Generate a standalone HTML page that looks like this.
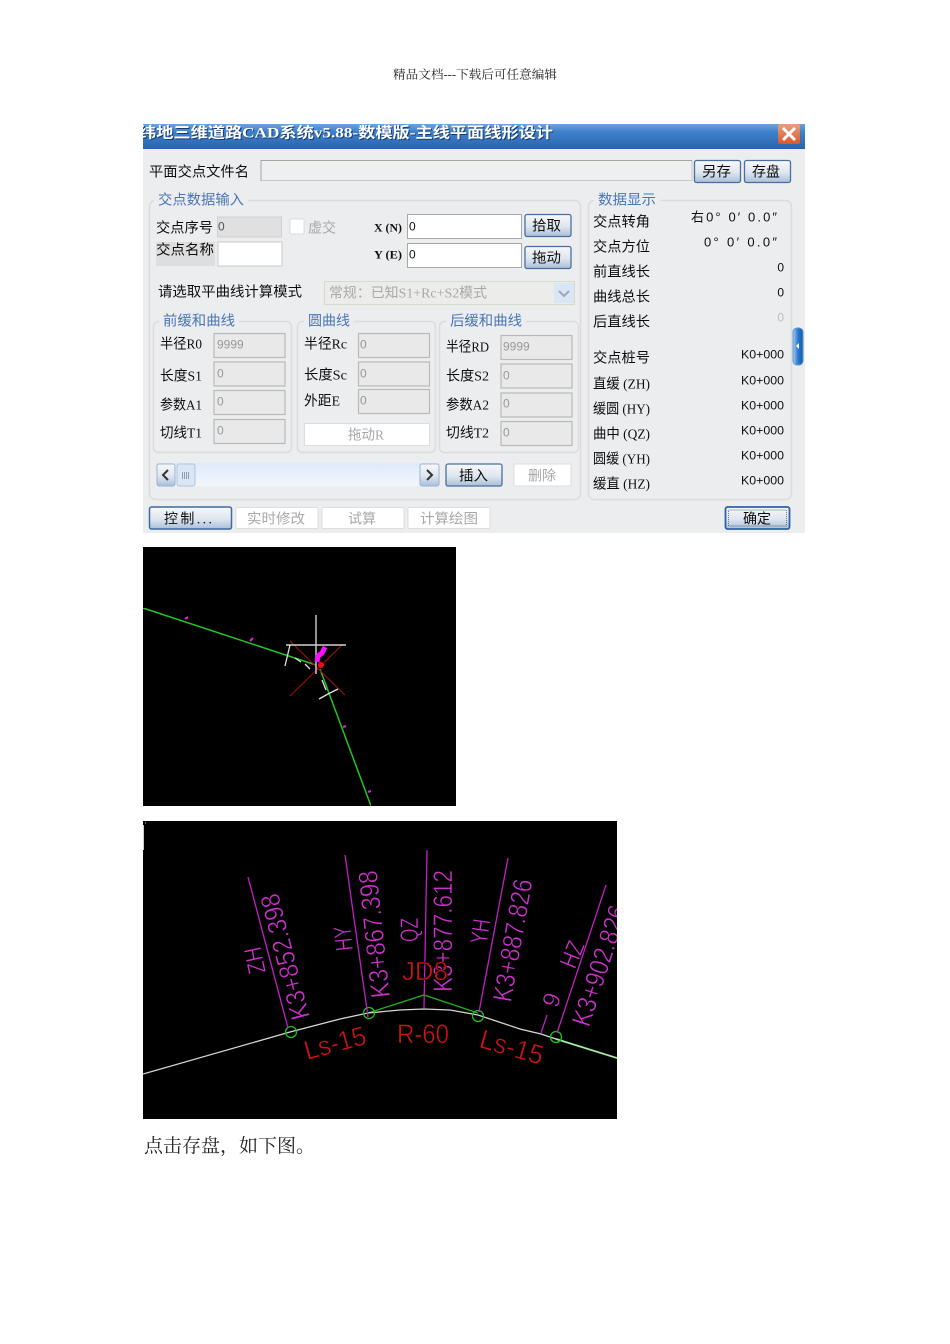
<!DOCTYPE html>
<html lang="zh"><head><meta charset="utf-8"><title>精品文档</title>
<style>
html,body{margin:0;padding:0;background:#fff;width:950px;height:1344px;overflow:hidden}
svg{display:block;position:absolute;left:0;top:0}
text{font-family:"Liberation Sans","Noto Sans CJK SC",sans-serif;white-space:pre}
.d text{font-size:14px;fill:#111;font-family:"Liberation Serif","Noto Sans CJK SC",serif;transform:translateY(.7px)}
.d text.n{font-family:"Liberation Sans","Noto Sans CJK SC",sans-serif}
.d text.s{font-family:"Liberation Serif","Noto Serif CJK SC",serif;fill:#111}
.d text.leg{fill:#4a74b4}
.d text.dis{fill:#a8a8a8}
.d text.val{font-size:12px;fill:#999;font-family:"Liberation Sans",sans-serif}
.d text.t1{font-family:"Liberation Serif","Noto Sans CJK SC",serif;font-size:15px;font-weight:bold;fill:#123a70}
.d text.t2{font-family:"Liberation Serif","Noto Sans CJK SC",serif;font-size:15px;font-weight:bold;fill:#fff}
.cad text{font-family:"Liberation Sans",sans-serif;stroke:#000;stroke-width:.55px;paint-order:fill}
.m{fill:#d030d0}
.r{fill:#cc1414}
</style></head><body>
<svg width="950" height="1344" viewBox="0 0 950 1344" xmlns="http://www.w3.org/2000/svg">
<defs>
<linearGradient id="tb" x1="0" y1="0" x2="0" y2="1"><stop offset="0" stop-color="#6ea4dc"/><stop offset=".3" stop-color="#3f82cc"/><stop offset="1" stop-color="#2a62ac"/></linearGradient>
<linearGradient id="btn" x1="0" y1="0" x2="0" y2="1"><stop offset="0" stop-color="#f6f8fb"/><stop offset=".55" stop-color="#dfe6ef"/><stop offset="1" stop-color="#a9bfd9"/></linearGradient>
<linearGradient id="track" x1="0" y1="0" x2="0" y2="1"><stop offset="0" stop-color="#dfeafa"/><stop offset="1" stop-color="#f2f6fc"/></linearGradient>
<linearGradient id="cl" x1="0" y1="0" x2="0" y2="1"><stop offset="0" stop-color="#e8a080"/><stop offset="1" stop-color="#d8582c"/></linearGradient>
<linearGradient id="hd" x1="0" y1="0" x2="1" y2="0"><stop offset="0" stop-color="#a8d0f0"/><stop offset=".5" stop-color="#2a78d0"/><stop offset="1" stop-color="#1a5aa8"/></linearGradient>
<filter id="b" x="0" y="0" width="100%" height="100%"><feGaussianBlur stdDeviation="0.35"/></filter>
<clipPath id="c1"><rect x="143" y="124" width="662" height="409"/></clipPath>
<clipPath id="c3"><rect x="143" y="821" width="474" height="298"/></clipPath>
</defs>

<text x="393" y="78.500" font-size="12" textLength="164" lengthAdjust="spacingAndGlyphs" style="font-family:'Liberation Serif','Noto Serif CJK SC',serif" fill="#222">精品文档---下载后可任意编辑</text>

<g class="d" clip-path="url(#c1)" filter="url(#b)">
<rect x="143" y="124" width="662" height="409" fill="#ecedef"/>
<rect x="143" y="124" width="662" height="25" fill="url(#tb)"/>
<text class="t1" x="140" y="138" textLength="414" lengthAdjust="spacingAndGlyphs">纬地三维道路CAD系统v5.88-数模版-主线平面线形设计</text>
<text class="t2" x="139" y="137" textLength="414" lengthAdjust="spacingAndGlyphs">纬地三维道路CAD系统v5.88-数模版-主线平面线形设计</text>
<rect x="778" y="124" width="22" height="20" rx="2" fill="url(#cl)"/>
<path d="M783 128L795 140M795 128L783 140" stroke="#fff" stroke-width="3"/>

<text x="149" y="176" textLength="100" lengthAdjust="spacingAndGlyphs">平面交点文件名</text>
<rect x="261" y="160.500" width="431" height="20" fill="#eeeff1" stroke="#c9c9c6"/>
<path d="M261 181V160.500H692" fill="none" stroke="#a5a5a0"/>

<rect x="694.500" y="160.500" width="46" height="22" rx="2" fill="url(#btn)" stroke="#4a6f9c" stroke-width="1.300"/>
<text x="702" y="176" textLength="29" lengthAdjust="spacingAndGlyphs">另存</text>
<rect x="744.500" y="160.500" width="46" height="22" rx="2" fill="url(#btn)" stroke="#4a6f9c" stroke-width="1.300"/>
<text x="752" y="176" textLength="28" lengthAdjust="spacingAndGlyphs">存盘</text>

<rect x="149.500" y="200.500" width="431" height="299" rx="6" fill="#ecedef" stroke="#dcdcdc" stroke-width="1.500"/>
<rect x="154" y="194" width="94" height="12" fill="#ecedef"/>
<text class="leg" x="158" y="204" textLength="86" lengthAdjust="spacingAndGlyphs">交点数据输入</text>
<rect x="588.500" y="200.500" width="203" height="299" rx="6" fill="#ecedef" stroke="#dcdcdc" stroke-width="1.500"/>
<rect x="594" y="194" width="66" height="12" fill="#ecedef"/>
<text class="leg" x="598" y="204" textLength="58" lengthAdjust="spacingAndGlyphs">数据显示</text>

<text x="156" y="232" textLength="57" lengthAdjust="spacingAndGlyphs">交点序号</text>
<rect x="217.500" y="217" width="64" height="20" fill="#e0e0e0" stroke="#d0d0d0"/>
<text class="n" x="218" y="230" style="font-size:12px;fill:#555">0</text>
<rect x="156" y="242" width="59" height="24" fill="#dedede"/>
<text x="156" y="254" textLength="58" lengthAdjust="spacingAndGlyphs">交点名称</text>
<rect x="218" y="242" width="64" height="24" fill="#fff" stroke="#c8c8c8"/>
<rect x="290" y="219" width="14" height="15" rx="1" fill="#fff" stroke="#dcdcdc"/>
<text class="dis" x="308" y="232" textLength="28" lengthAdjust="spacingAndGlyphs">虚交</text>
<text class="s" x="374" y="231" style="font-size:12px;font-weight:bold" textLength="28" lengthAdjust="spacingAndGlyphs">X (N)</text>
<text class="s" x="374" y="258" style="font-size:12px;font-weight:bold" textLength="28" lengthAdjust="spacingAndGlyphs">Y (E)</text>
<rect x="407.500" y="214.500" width="114" height="24" fill="#fff" stroke="#a8a8a8"/>
<rect x="407.500" y="243.500" width="114" height="24" fill="#fff" stroke="#a8a8a8"/>
<text class="n" x="409" y="230" style="font-size:12px">0</text>
<text class="n" x="409" y="258" style="font-size:12px">0</text>
<rect x="525" y="214.500" width="46" height="22" rx="2" fill="url(#btn)" stroke="#4a6f9c" stroke-width="1.300"/>
<text x="532" y="230" textLength="29" lengthAdjust="spacingAndGlyphs">拾取</text>
<rect x="525" y="246.500" width="46" height="22" rx="2" fill="url(#btn)" stroke="#4a6f9c" stroke-width="1.300"/>
<text x="532" y="262" textLength="29" lengthAdjust="spacingAndGlyphs">拖动</text>

<text x="158" y="296" textLength="144" lengthAdjust="spacingAndGlyphs">请选取平曲线计算模式</text>
<rect x="324.500" y="281.500" width="250" height="23" fill="#ecedea" stroke="#d8d8d0"/>
<text class="dis" x="329" y="297" textLength="158" lengthAdjust="spacingAndGlyphs">常规：已知S1+Rc+S2模式</text>
<rect x="554" y="283" width="20" height="20" fill="#d8e6f6"/>
<path d="M559 291L564 296L569 291" fill="none" stroke="#9aa8b8" stroke-width="2"/>

<rect x="153.500" y="321.500" width="138" height="131" rx="5" fill="none" stroke="#dcdcdc" stroke-width="1.500"/>
<rect x="159" y="314" width="80" height="12" fill="#ecedef"/>
<text class="leg" x="163" y="325" textLength="72" lengthAdjust="spacingAndGlyphs">前缓和曲线</text>
<rect x="297.500" y="321.500" width="138" height="131" rx="5" fill="none" stroke="#dcdcdc" stroke-width="1.500"/>
<rect x="304" y="314" width="50" height="12" fill="#ecedef"/>
<text class="leg" x="308" y="325" textLength="42" lengthAdjust="spacingAndGlyphs">圆曲线</text>
<rect x="439.500" y="321.500" width="139" height="131" rx="5" fill="none" stroke="#dcdcdc" stroke-width="1.500"/>
<rect x="446" y="314" width="80" height="12" fill="#ecedef"/>
<text class="leg" x="450" y="325" textLength="72" lengthAdjust="spacingAndGlyphs">后缓和曲线</text>

<g fill="#e9e9e9" stroke="#b9b9b9" stroke-width="1.200">
<rect x="214" y="333.500" width="71" height="24"/><rect x="214" y="362" width="71" height="24"/><rect x="214" y="390.500" width="71" height="24"/><rect x="214" y="419.500" width="71" height="24"/>
<rect x="358.500" y="333.500" width="71" height="24"/><rect x="358.500" y="362" width="71" height="24"/><rect x="358.500" y="389.500" width="71" height="24"/>
<rect x="501" y="335.500" width="71" height="24"/><rect x="501" y="364" width="71" height="24"/><rect x="501" y="393" width="71" height="24"/><rect x="501" y="421.500" width="71" height="24"/>
</g>
<text class="val" x="217" y="348">9999</text><text class="val" x="217" y="377">0</text><text class="val" x="217" y="405">0</text><text class="val" x="217" y="434">0</text>
<text class="val" x="360" y="348">0</text><text class="val" x="360" y="377">0</text><text class="val" x="360" y="404">0</text>
<text class="val" x="503" y="350">9999</text><text class="val" x="503" y="379">0</text><text class="val" x="503" y="407">0</text><text class="val" x="503" y="436">0</text>

<text x="160" y="348" textLength="42" lengthAdjust="spacingAndGlyphs">半径R0</text>
<text x="160" y="380" textLength="42" lengthAdjust="spacingAndGlyphs">长度S1</text>
<text x="160" y="409" textLength="42" lengthAdjust="spacingAndGlyphs">参数A1</text>
<text x="160" y="437" textLength="42" lengthAdjust="spacingAndGlyphs">切线T1</text>
<text x="304" y="348" textLength="43" lengthAdjust="spacingAndGlyphs">半径Rc</text>
<text x="304" y="379" textLength="43" lengthAdjust="spacingAndGlyphs">长度Sc</text>
<text x="304" y="405" textLength="36" lengthAdjust="spacingAndGlyphs">外距E</text>
<text x="446" y="351" textLength="43" lengthAdjust="spacingAndGlyphs">半径RD</text>
<text x="446" y="380" textLength="43" lengthAdjust="spacingAndGlyphs">长度S2</text>
<text x="446" y="409" textLength="43" lengthAdjust="spacingAndGlyphs">参数A2</text>
<text x="446" y="437" textLength="43" lengthAdjust="spacingAndGlyphs">切线T2</text>
<rect x="304.500" y="423.500" width="125" height="22" rx="1" fill="#fff" stroke="#ddd"/>
<text class="dis" x="348" y="439" textLength="36" lengthAdjust="spacingAndGlyphs">拖动R</text>

<rect x="156" y="463" width="283" height="23" fill="url(#track)"/>
<rect x="157" y="464" width="18" height="22" rx="2" fill="url(#btn)" stroke="#9db4d0"/>
<path d="M168 470L163 475L168 480" fill="none" stroke="#333" stroke-width="2"/>
<rect x="177" y="464" width="18" height="22" rx="2" fill="#dbe6f4" stroke="#b0c4dc"/>
<path d="M182.500 472V479M184.500 472V479M186.500 472V479M188.500 472V479" stroke="#7d8ca0" stroke-width=".8"/>
<rect x="420" y="464" width="19" height="22" rx="2" fill="url(#btn)" stroke="#9db4d0"/>
<path d="M427 470L432 475L427 480" fill="none" stroke="#333" stroke-width="2"/>
<rect x="446" y="464" width="56" height="22" rx="2" fill="url(#btn)" stroke="#4a6f9c" stroke-width="1.300"/>
<text x="459" y="480" textLength="29" lengthAdjust="spacingAndGlyphs">插入</text>
<rect x="514" y="464" width="57" height="22" rx="1" fill="#fff" stroke="#ddd"/>
<text class="dis" x="528" y="480" textLength="28" lengthAdjust="spacingAndGlyphs">删除</text>

<rect x="149.500" y="507" width="82" height="22" rx="2" fill="url(#btn)" stroke="#3f6ba4" stroke-width="1.500"/>
<text x="164" y="523" textLength="48" lengthAdjust="spacing">控制...</text>
<g fill="#fff" stroke="#ddd"><rect x="236" y="507.500" width="82" height="21" rx="1"/><rect x="322" y="507.500" width="82" height="21" rx="1"/><rect x="408" y="507.500" width="82" height="21" rx="1"/></g>
<text class="dis" x="247" y="523" textLength="58" lengthAdjust="spacingAndGlyphs">实时修改</text>
<text class="dis" x="348" y="523" textLength="28" lengthAdjust="spacingAndGlyphs">试算</text>
<text class="dis" x="420" y="523" textLength="58" lengthAdjust="spacingAndGlyphs">计算绘图</text>
<rect x="725.500" y="507" width="64" height="22" rx="2" fill="url(#btn)" stroke="#2f62a8" stroke-width="1.800"/>
<rect x="728.500" y="510" width="58" height="16" fill="none" stroke="#444" stroke-dasharray="1 1" stroke-width=".7"/>
<text x="743" y="523" textLength="28" lengthAdjust="spacingAndGlyphs">确定</text>

<text x="593" y="226" textLength="57" lengthAdjust="spacingAndGlyphs">交点转角</text>
<text x="593" y="251" textLength="57" lengthAdjust="spacingAndGlyphs">交点方位</text>
<text x="593" y="276" textLength="57" lengthAdjust="spacingAndGlyphs">前直线长</text>
<text x="593" y="301" textLength="57" lengthAdjust="spacingAndGlyphs">曲线总长</text>
<text x="593" y="326" textLength="57" lengthAdjust="spacingAndGlyphs">后直线长</text>
<text x="593" y="362" textLength="57" lengthAdjust="spacingAndGlyphs">交点桩号</text>
<text x="593" y="388" textLength="57" lengthAdjust="spacingAndGlyphs">直缓 (ZH)</text>
<text x="593" y="413" textLength="57" lengthAdjust="spacingAndGlyphs">缓圆 (HY)</text>
<text x="593" y="438" textLength="57" lengthAdjust="spacingAndGlyphs">曲中 (QZ)</text>
<text x="593" y="463" textLength="57" lengthAdjust="spacingAndGlyphs">圆缓 (YH)</text>
<text x="593" y="488" textLength="57" lengthAdjust="spacingAndGlyphs">缓直 (HZ)</text>
<text class="n" x="691" y="221" style="font-size:13px" textLength="86" lengthAdjust="spacing">右0° 0′ 0.0″</text>
<text class="n" x="704" y="246" style="font-size:13px" textLength="73" lengthAdjust="spacing">0° 0′ 0.0″</text>
<text class="n" x="784" y="271" text-anchor="end" style="font-size:12px">0</text>
<text class="n" x="784" y="296" text-anchor="end" style="font-size:12px">0</text>
<text class="n" x="784" y="321" text-anchor="end" style="font-size:12px;fill:#bbb">0</text>
<text class="n" x="741" y="358" style="font-size:12px" textLength="43" lengthAdjust="spacingAndGlyphs">K0+000</text>
<text class="n" x="741" y="384" style="font-size:12px" textLength="43" lengthAdjust="spacingAndGlyphs">K0+000</text>
<text class="n" x="741" y="409" style="font-size:12px" textLength="43" lengthAdjust="spacingAndGlyphs">K0+000</text>
<text class="n" x="741" y="434" style="font-size:12px" textLength="43" lengthAdjust="spacingAndGlyphs">K0+000</text>
<text class="n" x="741" y="459" style="font-size:12px" textLength="43" lengthAdjust="spacingAndGlyphs">K0+000</text>
<text class="n" x="741" y="484" style="font-size:12px" textLength="43" lengthAdjust="spacingAndGlyphs">K0+000</text>
<rect x="793" y="328" width="10" height="37" rx="4" fill="url(#hd)" stroke="#5a9ad0"/>
<path d="M799 343V349L796 346Z" fill="#fff"/>
</g>

<rect x="143" y="547" width="313" height="259" fill="#000"/>
<g fill="none" filter="url(#b)">
<path d="M143 608L316 665" stroke="#22c422" stroke-width="1.500"/>
<path d="M320 669L371 806" stroke="#22c422" stroke-width="1.500"/>
<path d="M290 641L345 695M343 644L290 696" stroke="#9a1010" stroke-width="1.200"/>
<path d="M316 615V674M286 645H346" stroke="#d0d0d0" stroke-width="1.400"/>
<path d="M290 645L285 666M295 658L301 662M305 664L310 669M322 680L326 690M338 689L328 694L319 699" stroke="#e0e0e0" stroke-width="1.300"/>
<path d="M317 662L318 656L322 653L325 647" stroke="#ff10ff" stroke-width="5"/>
<path d="M185 619L188 617M250 641L253 638M343 727L346 726M368 792L371 791" stroke="#e020e0" stroke-width="2"/>
<circle cx="321" cy="665" r="3" fill="#f01010"/>
</g>

<g class="cad" clip-path="url(#c3)">
<rect x="143" y="821" width="474" height="298" fill="#000"/>
<path d="M143.500 825V850M145 823H146" stroke="#ccc" stroke-width="1" fill="none"/>
<path d="M368 1013L424 995L478 1013" fill="none" stroke="#1cb01c" stroke-width="1.400"/>
<path d="M556 1039L617 1058" fill="none" stroke="#1cc01c" stroke-width="2"/>
<path d="M143 1074L290 1032L340 1019L368 1013L400 1010L424 1009L450 1010L478 1015L520 1029L541 1034L556 1039L617 1058" fill="none" stroke="#d4d8d4" stroke-width="1.300"/>
<g fill="none" stroke="#1cc01c" stroke-width="1.300"><circle cx="291" cy="1032" r="5.500"/><circle cx="369" cy="1013" r="5.500"/><circle cx="478" cy="1016" r="5.500"/><circle cx="556" cy="1037" r="5.500"/></g>
<path d="M248 877L288 1028M345 855L368 1017M427 850L424 1008M508 858L479 1012M606 885L557 1033M547 1015L541 1033" fill="none" stroke="#c020c0" stroke-width="1.300"/>
<text class="m" font-size="27" transform="translate(310 1017) rotate(-104.400)" textLength="129" lengthAdjust="spacingAndGlyphs">K3+852.398</text>
<text class="m" font-size="25" transform="translate(266 972) rotate(-102)" textLength="27" lengthAdjust="spacingAndGlyphs">ZH</text>
<text class="m" font-size="27" transform="translate(390 997) rotate(-96)" textLength="128" lengthAdjust="spacingAndGlyphs">K3+867.398</text>
<text class="m" font-size="25" transform="translate(353 950) rotate(-96)" textLength="25" lengthAdjust="spacingAndGlyphs">HY</text>
<text class="m" font-size="27" transform="translate(452 992) rotate(-90)" textLength="122" lengthAdjust="spacingAndGlyphs">K3+877.612</text>
<text class="m" font-size="25" transform="translate(418 942) rotate(-90)" textLength="24" lengthAdjust="spacingAndGlyphs">QZ</text>
<text class="m" font-size="27" transform="translate(511 1003) rotate(-80)" textLength="124" lengthAdjust="spacingAndGlyphs">K3+887.826</text>
<text class="m" font-size="25" transform="translate(487 945) rotate(-82)" textLength="25" lengthAdjust="spacingAndGlyphs">YH</text>
<text class="m" font-size="27" transform="translate(589 1028) rotate(-72)" textLength="125" lengthAdjust="spacingAndGlyphs">K3+902.826</text>
<text class="m" font-size="25" transform="translate(575 970) rotate(-68)" textLength="27" lengthAdjust="spacingAndGlyphs">HZ</text>
<text class="m" font-size="24" transform="translate(557 1009) rotate(-70)">9</text>
<text class="r" font-size="27" transform="translate(307 1060) rotate(-15)" textLength="63" lengthAdjust="spacingAndGlyphs">Ls-15</text>
<text class="r" font-size="27" x="397" y="1043" textLength="52" lengthAdjust="spacingAndGlyphs">R-60</text>
<text class="r" font-size="27" transform="translate(478 1047) rotate(16)" textLength="65" lengthAdjust="spacingAndGlyphs">Ls-15</text>
<text class="r" font-size="26" x="402" y="980" textLength="46" lengthAdjust="spacingAndGlyphs">JD8</text>
</g>

<text x="144" y="1152" font-size="19" style="font-family:'Liberation Serif','Noto Serif CJK SC',serif" fill="#222">点击存盘，如下图。</text>
</svg>
</body></html>
